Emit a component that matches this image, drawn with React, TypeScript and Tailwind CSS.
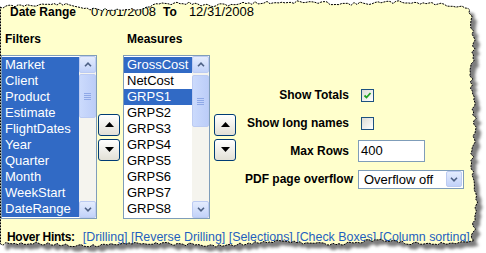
import React from "react";

const filters = ["Market", "Client", "Product", "Estimate", "FlightDates", "Year", "Quarter", "Month", "WeekStart", "DateRange"];
const measures = ["GrossCost", "NetCost", "GRPS1", "GRPS2", "GRPS3", "GRPS4", "GRPS5", "GRPS6", "GRPS7", "GRPS8"];

// seeded noise so the torn edge looks the same every render
const makeRand = (seed: number) => {
  let s = seed;
  return () => {
    s = (s * 9301 + 49297) % 233280;
    return s / 233280;
  };
};

const lerp = (anchors: number[][], t: number) => {
  for (let i = 0; i < anchors.length - 1; i++) {
    const [a0, v0] = anchors[i];
    const [a1, v1] = anchors[i + 1];
    const lo = Math.min(a0, a1);
    const hi = Math.max(a0, a1);
    if (t >= lo && t <= hi) return v0 + ((t - a0) / (a1 - a0 || 1)) * (v1 - v0);
  }
  return anchors[anchors.length - 1][1];
};

const tornPath = () => {
  const r = makeRand(11);
  const pts: string[] = [];
  const top = [[0, 7], [30, 5], [60, 4], [80, 7], [95, 10], [140, 9], [158, 4], [185, 3], [210, 6], [250, 3], [300, 2], [350, 4], [400, 2], [440, 4], [470, 8]];
  for (let x = 0; x <= 470; x += 3) pts.push(`${x} ${(lerp(top, x) + (r() - 0.5) * 3).toFixed(1)}`);
  const right = [[8, 470], [40, 474], [80, 471], [120, 475], [160, 472], [200, 476], [240, 473]];
  for (let y = 10; y <= 240; y += 3) pts.push(`${(lerp(right, y) + (r() - 0.5) * 4).toFixed(1)} ${y}`);
  const bottom = [[474, 242], [420, 244], [380, 240], [330, 245], [280, 241], [220, 246], [150, 243], [80, 246], [30, 243], [0, 244]];
  for (let x = 474; x >= 1; x -= 3) pts.push(`${x} ${(lerp(bottom, x) + (r() - 0.5) * 3).toFixed(1)}`);
  pts.push("0.5 244");
  pts.push("0.5 7");
  return "M" + pts.join(" L") + " Z";
};

const Chevron = ({ up }: { up?: boolean }) => (
  <svg width="8" height="5" viewBox="0 0 8 5">
    <path d={up ? "M1 4.2 L4 1.2 L7 4.2" : "M1 0.8 L4 3.8 L7 0.8"} stroke="#4d6185" strokeWidth="1.6" fill="none" />
  </svg>
);

const ScrollButton = ({ up }: { up?: boolean }) => (
  <div className="h-[17px] w-[17px] rounded-[2px] border border-[#bccbf2] bg-gradient-to-b from-[#e4ecfd] to-[#c2d2f9] flex items-center justify-center">
    <Chevron up={up} />
  </div>
);

const ScrollBar = ({ thumbTop, thumbH }: { thumbTop: number; thumbH: number }) => (
  <div className="w-[17px] flex flex-col bg-[#f5f4ee]">
    <ScrollButton up />
    <div
      className="w-[17px] rounded-[2px] border border-[#bccbf2] bg-gradient-to-r from-[#cbdafc] to-[#bccdf8] flex flex-col items-center justify-center gap-px"
      style={{ marginTop: thumbTop, height: thumbH }}
    >
      <div className="w-[7px] h-px bg-[#8fa8e6]" />
      <div className="w-[7px] h-px bg-[#8fa8e6]" />
      <div className="w-[7px] h-px bg-[#8fa8e6]" />
      <div className="w-[7px] h-px bg-[#8fa8e6]" />
    </div>
    <div className="flex-1" />
    <ScrollButton />
  </div>
);

const ListBox = ({ items, selected, width, thumbTop, thumbH }: { items: string[]; selected: string[]; width: string; thumbTop: number; thumbH: number }) => (
  <div className={`${width} h-[164px] border border-[#7f9db9] bg-white flex`}>
    <div className="flex-1 pt-px overflow-hidden">
      {items.map((it) => (
        <div
          key={it}
          className={`h-[16px] leading-[16px] pl-[3px] text-[13px] whitespace-nowrap ${selected.includes(it) ? "bg-[#316ac5] text-white" : "text-black"}`}
        >
          {it}
        </div>
      ))}
    </div>
    <ScrollBar thumbTop={thumbTop} thumbH={thumbH} />
  </div>
);

const MoveButton = ({ up }: { up?: boolean }) => (
  <div className="w-[22px] h-[22px] rounded-[3px] border border-[#003c74] bg-gradient-to-b from-white to-[#e2e0d6] flex items-center justify-center">
    <svg width="9" height="5" viewBox="0 0 9 5">
      <path d={up ? "M4.5 0 L9 5 H0 Z" : "M0 0 H9 L4.5 5 Z"} fill="#000" />
    </svg>
  </div>
);

const MoveButtons = () => (
  <div className="flex flex-col gap-[3px]">
    <MoveButton up />
    <MoveButton />
  </div>
);

const Checkbox = ({ checked }: { checked?: boolean }) => (
  <div className="ml-[3px] w-[13px] h-[13px] border border-[#1c5180] bg-gradient-to-br from-[#dcdcd6] to-white flex items-center justify-center">
    {checked && (
      <svg width="9" height="9" viewBox="0 0 9 9">
        <path d="M1.5 4.5 L3.5 6.5 L7.5 2" stroke="#21a121" strokeWidth="1.8" fill="none" />
      </svg>
    )}
  </div>
);

const OptionRow = ({ label, children }: { label: string; children: React.ReactNode }) => (
  <div className="h-[28px] flex items-center">
    <div className="w-[104px] text-right font-bold text-[12px] whitespace-nowrap">{label}</div>
    <div className="ml-[9px] flex items-center">{children}</div>
  </div>
);

export default function App() {
  const d = tornPath();
  return (
    <div className="relative w-[486px] h-[253px] bg-white overflow-hidden font-['Liberation_Sans',Arial,sans-serif] text-black">
      <div className="h-full bg-[#ffffcc] pl-px pt-[4px]">
        <div className="h-[16px] flex items-center ml-[9px] text-[13px]">
          <span className="font-bold text-[12px]">Date Range</span>
          <span className="ml-[15px]">07/01/2008</span>
          <span className="ml-[7px] font-bold text-[12px]">To</span>
          <span className="ml-[12px]">12/31/2008</span>
        </div>

        <div className="flex mt-[11px]">
          <div className="flex flex-col">
            <div className="h-[16px] leading-[16px] ml-[4px] font-bold text-[12px]">Filters</div>
            <div className="mt-[8px]">
              <ListBox items={filters} selected={filters} width="w-[96px]" thumbTop={1} thumbH={44} />
            </div>
          </div>
          <div className="ml-px flex items-center pt-[24px]">
            <MoveButtons />
          </div>
          <div className="flex flex-col ml-[3px]">
            <div className="h-[16px] leading-[16px] ml-[4px] font-bold text-[12px]">Measures</div>
            <div className="mt-[8px]">
              <ListBox items={measures} selected={["GrossCost", "GRPS1"]} width="w-[87px]" thumbTop={2} thumbH={52} />
            </div>
          </div>
          <div className="ml-[4px] flex items-center pt-[24px]">
            <MoveButtons />
          </div>
          <div className="ml-[9px] flex flex-col justify-center mt-[24px]">
            <OptionRow label="Show Totals">
              <Checkbox checked />
            </OptionRow>
            <OptionRow label="Show long names">
              <Checkbox />
            </OptionRow>
            <OptionRow label="Max Rows">
              <div className="w-[67px] h-[22px] border border-[#7f9db9] bg-white text-[13px] leading-[20px] pl-[2px]">400</div>
            </OptionRow>
            <OptionRow label="PDF page overflow">
              <div className="w-[106px] h-[19px] border border-[#7f9db9] bg-white flex items-center">
                <div className="flex-1 text-[13px] pl-[5px] leading-[17px]">Overflow off</div>
                <div className="w-[16px] h-[16px] mr-px rounded-[2px] border border-[#bccbf2] bg-gradient-to-b from-[#e4ecfd] to-[#c2d2f9] flex items-center justify-center">
                  <Chevron />
                </div>
              </div>
            </OptionRow>
          </div>
        </div>

        <div className="flex items-center h-[16px] mt-[10px] ml-[6px] whitespace-nowrap">
          <span className="font-bold text-[12px] tracking-[-0.3px]">Hover Hints:</span>
          <span className="ml-[8px] text-[12.4px] text-[#1f5fbf]">
            [Drilling] [Reverse Drilling] [Selections] [Check Boxes] [Column sorting]
          </span>
        </div>
      </div>

      <svg className="absolute inset-0 pointer-events-none" width={486} height={253}>
        <defs>
          <clipPath id="outside">
            <path clipRule="evenodd" d={`M0 0 H486 V253 H0 Z ${d}`} />
          </clipPath>
          <filter id="soft" x="-5%" y="-5%" width="110%" height="110%">
            <feGaussianBlur stdDeviation="1.4" />
          </filter>
        </defs>
        <g clipPath="url(#outside)">
          <rect width={486} height={253} fill="#fff" />
          <path d={d} transform="translate(5 5)" fill="#7d7d7d" filter="url(#soft)" />
        </g>
        <path d={d} fill="none" stroke="#000" strokeWidth={1} strokeDasharray="2 1" />
      </svg>
    </div>
  );
}
